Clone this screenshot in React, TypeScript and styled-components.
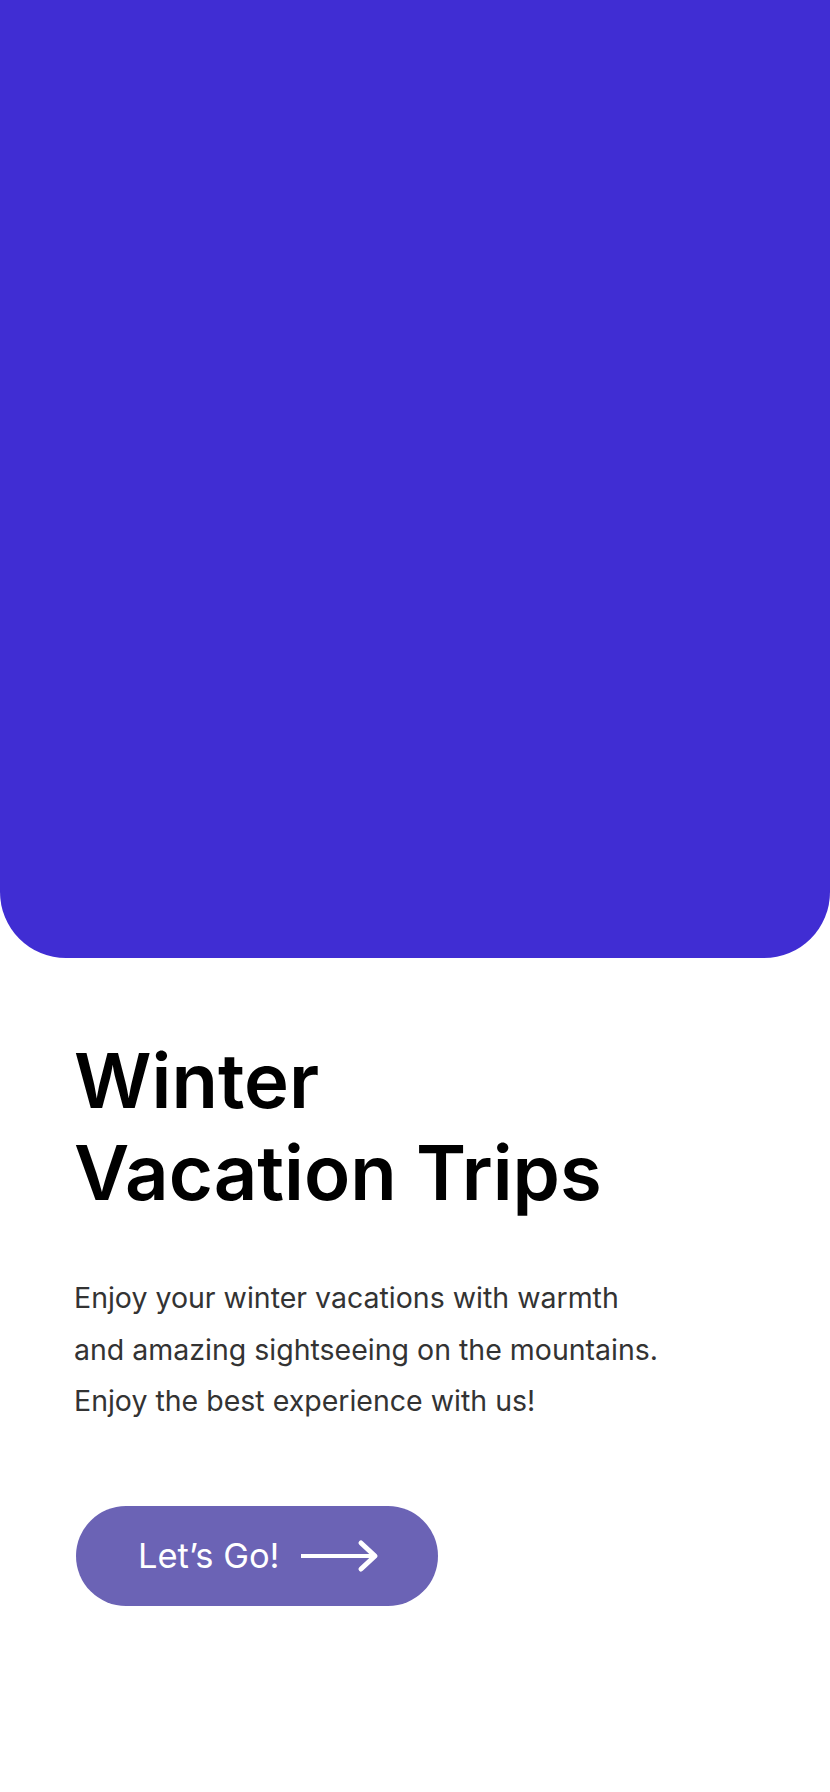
import React from "react";
import styled, { createGlobalStyle } from "styled-components";

const GlobalStyle = createGlobalStyle`
  html, body { margin: 0; padding: 0; background: #ffffff; }
  body { font-family: Inter, "Noto Sans", sans-serif; }
`;

const Page = styled.main`
  width: 830px;
  min-height: 1792px;
  background: #ffffff;
  display: flex;
  flex-direction: column;
`;

const Hero = styled.div`
  height: 958px;
  background: #402dd3;
  border-radius: 0 0 66px 66px;
`;

const Content = styled.section`
  display: flex;
  flex-direction: column;
  align-items: flex-start;
  padding: 76px 74px 0 74px;
`;

const Title = styled.h1`
  margin: 0;
  font-family: Inter, sans-serif;
  font-weight: 600;
  font-size: 76px;
  line-height: 92px;
  color: #000000;
  letter-spacing: 0;
`;

const Description = styled.p`
  margin: 54px 0 0 0;
  font-family: Inter, sans-serif;
  font-weight: 400;
  font-size: 28.5px;
  line-height: 51.5px;
  color: #333333;
`;

const Button = styled.button`
  margin-top: 79px;
  margin-left: 2px;
  width: 362px;
  height: 100px;
  border: none;
  border-radius: 50px;
  background: #6b63b5;
  color: #ffffff;
  display: flex;
  align-items: center;
  padding: 0 0 0 62px;
  gap: 21px;
  font-family: Inter, sans-serif;
  font-weight: 400;
  font-size: 34.5px;
  cursor: pointer;
`;

const Arrow = () => (
  <svg width="78" height="34" viewBox="0 0 78 34" fill="none">
    <line x1="0" y1="17" x2="74" y2="17" stroke="#fff" strokeWidth="4" />
    <polyline
      points="60,4 74,17 60,30"
      stroke="#fff"
      strokeWidth="5"
      strokeLinecap="round"
      strokeLinejoin="round"
      fill="none"
    />
  </svg>
);

export default function App() {
  return (
    <>
      <GlobalStyle />
      <Page>
        <Hero />
        <Content>
          <Title>
            Winter
            <br />
            Vacation Trips
          </Title>
          <Description>
            Enjoy your winter vacations with warmth
            <br />
            and amazing sightseeing on the mountains.
            <br />
            Enjoy the best experience with us!
          </Description>
          <Button>
            <span>Let’s Go!</span>
            <Arrow />
          </Button>
        </Content>
      </Page>
    </>
  );
}
